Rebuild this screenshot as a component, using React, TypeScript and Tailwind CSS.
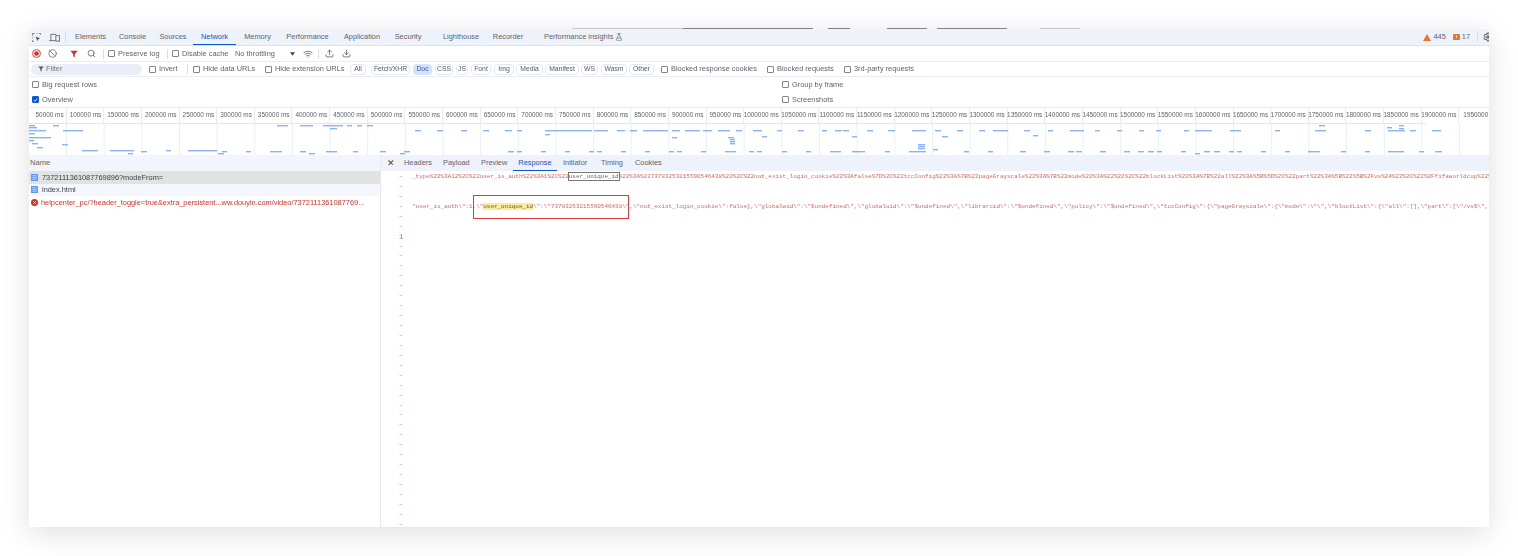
import { Ban, Download, FlaskConical, Search, Settings, Upload, Wifi } from 'lucide-react';

const sans = "font-['Liberation_Sans',Arial,sans-serif]";

const ticks = Array.from({ length: 39 }, (_, i) => (i + 1) * 50000);

// overview bars: [x1, x2, y]
const blue: number[][] = [
  [29, 35, 125], [53, 59, 125], [29, 37, 127], [29, 46, 130], [63, 83, 130], [29, 35, 133], [29, 51, 137], [29, 34, 140], [32, 38, 143], [62, 68, 144], [37, 43, 147],
  [82, 98, 150], [110, 134, 150], [141, 147, 151], [166, 171, 150], [188, 217, 150], [222, 227, 151], [246, 251, 151], [270, 282, 151], [300, 306, 151], [326, 337, 151], [353, 358, 151], [380, 386, 151], [404, 410, 151],
  [128, 133, 153], [218, 224, 153], [309, 315, 153], [400, 405, 153],
  [277, 288, 125], [300, 313, 125], [323, 343, 125], [347, 352, 125], [357, 362, 125], [367, 373, 125], [330, 337, 128],
  [415, 421, 130], [437, 443, 130], [461, 467, 130], [483, 489, 130],
  [505, 512, 130], [517, 522, 130], [545, 592, 130], [594, 608, 130], [617, 625, 130], [630, 637, 130], [643, 668, 130], [672, 680, 130], [685, 700, 130], [703, 712, 130], [718, 730, 130], [736, 742, 130], [753, 762, 130], [777, 782, 130], [798, 804, 130], [822, 827, 130], [835, 842, 130], [843, 849, 130], [867, 873, 130], [888, 895, 130], [912, 926, 130], [935, 941, 130], [957, 963, 130], [979, 985, 130], [993, 1008, 130],
  [545, 550, 134], [672, 677, 137], [762, 767, 136], [852, 857, 136], [942, 948, 136], [728, 734, 137], [730, 735, 139], [730, 735, 141], [730, 735, 143], [918, 925, 144], [918, 925, 146], [918, 925, 148],
  [508, 514, 151], [517, 522, 151], [541, 546, 151], [565, 570, 151], [589, 594, 151], [597, 602, 151], [621, 626, 151], [645, 650, 151], [669, 674, 151], [677, 682, 151], [701, 706, 151], [725, 736, 151], [749, 754, 151], [757, 762, 151], [782, 787, 151], [806, 811, 151], [830, 841, 151], [852, 865, 151], [885, 890, 151], [909, 926, 151], [933, 938, 149], [964, 969, 151], [988, 993, 151],
  [1024, 1030, 130], [1048, 1053, 130], [1070, 1084, 130], [1095, 1100, 130], [1117, 1122, 130], [1139, 1144, 130], [1156, 1161, 130], [1184, 1189, 130], [1195, 1212, 130], [1230, 1241, 130], [1275, 1280, 130], [1315, 1326, 130], [1365, 1371, 130], [1388, 1405, 130], [1410, 1416, 130], [1432, 1441, 130],
  [1319, 1325, 125], [1399, 1404, 125], [1387, 1392, 127], [1399, 1404, 128], [1033, 1038, 135],
  [1020, 1026, 151], [1044, 1050, 151], [1068, 1074, 151], [1076, 1082, 151], [1100, 1106, 151], [1124, 1130, 151], [1138, 1144, 151], [1148, 1154, 151], [1157, 1162, 151], [1181, 1186, 151], [1195, 1200, 153], [1204, 1210, 151], [1214, 1220, 151], [1229, 1234, 151], [1237, 1242, 151], [1261, 1266, 151], [1285, 1290, 151], [1308, 1320, 151], [1341, 1346, 151], [1365, 1370, 151], [1388, 1404, 151], [1419, 1424, 151], [1435, 1442, 151],
];

const chips = [
  ['All', 'w-[16px] mr-[5px]'],
  ['Fetch/XHR', 'w-[39px] mr-[3px]'],
  ['Doc', 'w-[19px] mr-[3px]'],
  ['CSS', 'w-[18px] mr-[3px]'],
  ['JS', 'w-[12px] mr-[3px]'],
  ['Font', 'w-[20px] mr-[3px]'],
  ['Img', 'w-[20px] mr-[2px]'],
  ['Media', 'w-[27px] mr-[2px]'],
  ['Manifest', 'w-[34px] mr-[2px]'],
  ['WS', 'w-[17px] mr-[3px]'],
  ['Wasm', 'w-[26px] mr-[2px]'],
  ['Other', 'w-[25px]'],
];

const mainTabs = [
  ['Elements', 'ml-[3px] w-[43px]'],
  ['Console', 'w-[41px]'],
  ['Sources', 'w-[40px]'],
  ['Network', 'w-[43px] text-[#0b57d0] border-b border-[#0b57d0]'],
  ['Memory', 'w-[43px]'],
  ['Performance', 'w-[57px]'],
  ['Application', 'w-[52px]'],
  ['Security', 'w-[40px]'],
  ['Lighthouse', 'w-[66px]'],
  ['Recorder', 'w-[28px]'],
];

const paneTabs = [
  ['Headers', 'w-[39px]'],
  ['Payload', 'w-[38px]'],
  ['Preview', 'w-[32px]'],
  ['Response', 'w-[44px] justify-center text-[#0b57d0] border-b border-[#0b57d0] mr-[6px]'],
  ['Initiator', 'w-[38px]'],
  ['Timing', 'w-[34px]'],
  ['Cookies', 'w-[40px]'],
];

function Check({ on = false, label, className = '' }: { on?: boolean; label: string; className?: string }) {
  return (
    <span className={`flex items-center shrink-0 ${className}`}>
      <span
        className={`flex items-center justify-center w-[7px] h-[7px] rounded-[1px] border mr-[3px] ${on ? 'bg-[#0b57d0] border-[#0b57d0]' : 'bg-white border-[#80848a]'}`}
      >
        {on && (
          <svg viewBox="0 0 8 8" className="w-[6px] h-[6px]">
            <path d="M1.2 4.2 3.2 6.2 6.8 1.8" fill="none" stroke="#fff" strokeWidth="1.3" />
          </svg>
        )}
      </span>
      {label}
    </span>
  );
}

function Divider({ className = '' }: { className?: string }) {
  return <span className={`w-px h-[10px] bg-[#d9dee6] shrink-0 ${className}`} />;
}

function DocIcon() {
  return (
    <svg viewBox="0 0 8 8" className="w-[7px] h-[7px] shrink-0 mr-[4px]">
      <rect x="0" y="0" width="8" height="8" fill="#5f9bf0" />
      <path d="M1.5 2h5M1.5 4h5M1.5 6h5" stroke="#d6e5fc" strokeWidth="0.8" />
    </svg>
  );
}

export default function App() {
  return (
    <div className={`w-[1518px] h-[556px] overflow-hidden bg-white pt-[28px] pl-[29px] ${sans}`}>
      <svg width="1460" height="1" className="block">
        <path d="M543 .5h111M1011 .5h40" stroke="#a8a8a8" strokeWidth="1" opacity="0.5" />
        <path d="M654 .5h130M799 .5h22M858 .5h40M908 .5h70" stroke="#6b6b6b" strokeWidth="1" opacity="0.8" />
      </svg>
      <div className="w-[1460px] h-[498px] flex flex-col bg-white text-[7.4px] leading-none text-[#5f6368] shadow-[0_6px_28px_rgba(0,0,0,0.13)] blur-[0.5px]">
        {/* main tabs */}
        <div className="h-[17px] shrink-0 flex items-stretch bg-[#edf2fb] border-b border-[#dbe3f0] overflow-hidden">
          <span className="flex items-center pl-[3px]">
            <svg viewBox="0 0 10 10" className="w-[9px] h-[9px] mr-[8px]">
              <path d="M3 .5H.5V3M.5 5v1M.5 8v1.5H2M5 .5h1M8 .5h1.5V2" fill="none" stroke="#555" strokeWidth="0.8" />
              <path d="M4 4l5 2-2 1 -1 2z" fill="#555" />
            </svg>
            <svg viewBox="0 0 12 10" className="w-[11px] h-[9px] mr-[5px]">
              <path d="M2 8V1.5h6M0 8.5h7" fill="none" stroke="#555" strokeWidth="0.9" />
              <rect x="7.5" y="3" width="4" height="6" fill="none" stroke="#555" strokeWidth="0.9" />
            </svg>
            <Divider />
          </span>
          {mainTabs.map(([t, c]) => (
            <span key={t} className={`flex items-center justify-center shrink-0 whitespace-nowrap ${c}`}>
              {t}
            </span>
          ))}
          <span className="flex items-center shrink-0 ml-[22px]">
            Performance insights
            <FlaskConical className="w-[8px] h-[8px] ml-[2px] text-[#555]" strokeWidth={1.6} />
          </span>
          <span className="flex items-center ml-auto">
            <svg viewBox="0 0 8 7" className="w-[8px] h-[7px] mr-[2px]">
              <path d="M4 0 8 7H0z" fill="#e8742c" />
            </svg>
            445
            <svg viewBox="0 0 8 7" className="w-[7px] h-[6px] ml-[7px] mr-[2px]">
              <rect width="8" height="7" rx="1" fill="#e8742c" />
              <rect x="3.5" y="1.5" width="1" height="3" fill="#fff" />
            </svg>
            17
            <Divider className="ml-[7px] mr-[5px]" />
            <Settings className="w-[10px] h-[10px] text-[#333] -mr-[4px]" strokeWidth={2.2} />
          </span>
        </div>

        {/* toolbar */}
        <div className="h-[16px] shrink-0 flex items-center border-b border-[#e9eef6] pl-[3px]">
          <svg viewBox="0 0 10 10" className="w-[9px] h-[9px] mr-[7px]">
            <circle cx="5" cy="5" r="4.4" fill="none" stroke="#d93025" />
            <circle cx="5" cy="5" r="2.6" fill="#d93025" />
          </svg>
          <Ban className="w-[9px] h-[9px] text-[#555] mr-[13px]" strokeWidth={1.8} />
          <svg viewBox="0 0 10 10" className="w-[8px] h-[8px] mr-[9px]">
            <path d="M.5 1h9L6 5.2V9L4 7.8V5.2z" fill="#d93025" />
          </svg>
          <Search className="w-[9px] h-[9px] text-[#555] mr-[7px]" strokeWidth={2} />
          <Divider className="mr-[4px]" />
          <Check label="Preserve log" className="w-[59px]" />
          <Divider className="mr-[4px]" />
          <Check label="Disable cache" className="w-[63px]" />
          <span className="w-[55px] shrink-0">No throttling</span>
          <svg viewBox="0 0 6 4" className="w-[5px] h-[4px] mr-[8px]">
            <path d="M0 0h6L3 4z" fill="#444" />
          </svg>
          <Wifi className="w-[10px] h-[10px] text-[#555] mr-[5px]" strokeWidth={1.8} />
          <Divider className="mr-[6px]" />
          <Upload className="w-[9px] h-[9px] text-[#444] mr-[8px]" strokeWidth={1.8} />
          <Download className="w-[9px] h-[9px] text-[#444]" strokeWidth={1.8} />
        </div>

        {/* filter bar */}
        <div className="h-[15px] shrink-0 flex items-center border-b border-[#e9eef6] pl-[2px]">
          <span className="flex items-center w-[111px] h-[11px] rounded-full bg-[#e9eef9] pl-[7px] mr-[7px] shrink-0 text-[#777]">
            <svg viewBox="0 0 10 10" className="w-[6px] h-[6px] mr-[2px]">
              <path d="M.5 1h9L6 5.2V9L4 7.8V5.2z" fill="#555" />
            </svg>
            Filter
          </span>
          <Check label="Invert" className="w-[38px]" />
          <Divider className="mr-[5px]" />
          <Check label="Hide data URLs" className="w-[72px]" />
          <Check label="Hide extension URLs" className="w-[85px]" />
          {chips.map(([t, c]) => (
            <span
              key={t}
              className={`flex items-center justify-center h-[11px] rounded-[4px] shrink-0 text-[6.8px] ${c} ${t === 'Doc' ? 'bg-[#d3e3fd] text-[#3a5a8c]' : 'border border-[#e3e7ee] text-[#555a61]'}`}
            >
              {t}
            </span>
          ))}
          <Check label="Blocked response cookies" className="w-[106px] ml-[7px]" />
          <Check label="Blocked requests" className="w-[77px]" />
          <Check label="3rd-party requests" />
        </div>

        {/* settings */}
        <div className="h-[30px] shrink-0 grid grid-cols-[750px_1fr] grid-rows-2 items-center pl-[3px]">
          <Check label="Big request rows" />
          <Check label="Group by frame" />
          <Check on label="Overview" />
          <Check label="Screenshots" />
        </div>

        {/* timeline ruler */}
        <div className="h-[16px] shrink-0 flex items-center border-t border-[#e4eaf5] text-[6.4px] overflow-hidden">
          {ticks.slice(0, 38).map(t => (
            <span key={t} className="w-[37.65px] shrink-0 h-full flex items-center justify-end pr-[2px] border-r border-[#e3ecfb] whitespace-nowrap">
              {t} ms
            </span>
          ))}
          <span className="pl-[4px] whitespace-nowrap">1950000</span>
        </div>

        {/* overview chart */}
        <svg width="1460" height="32" viewBox="29 123 1460 32" className="block shrink-0">
          <line x1="29" x2="1425" y1="123.5" y2="123.5" stroke="#e3e5e8" />
          {ticks.map((_, i) => (
            <line key={i} x1={66.5 + i * 37.65} x2={66.5 + i * 37.65} y1="123" y2="155" stroke="#e8effc" />
          ))}
          {blue.map(([a, b, y], i) => (
            <rect key={i} x={a} y={y} width={b - a} height="1.4" fill="#8ab4f8" />
          ))}
        </svg>

        {/* split view */}
        <div className="flex-1 min-h-0 flex">
          <div className="w-[352px] shrink-0 flex flex-col border-r border-[#e3e8f2]">
            <div className="h-[16px] shrink-0 flex items-center pl-[1px] text-[7.6px] bg-[#f2f5fc]">Name</div>
            <div className="h-[12.5px] flex items-center pl-[2px] bg-[#e0e3e1] text-[#3d4043] text-[7.4px]">
              <DocIcon />
              7372111361087769896?modeFrom=
            </div>
            <div className="h-[12.5px] flex items-center pl-[2px] bg-[#f5f7fd] text-[#3d4043] text-[7.4px]">
              <DocIcon />
              index.html
            </div>
            <div className="h-[13px] flex items-center pl-[2px] text-[#d93025] text-[7.4px] whitespace-nowrap overflow-hidden">
              <svg viewBox="0 0 8 8" className="w-[7px] h-[7px] shrink-0 mr-[3px]">
                <circle cx="4" cy="4" r="4" fill="#d93025" />
                <path d="M2.5 2.5l3 3M5.5 2.5l-3 3" stroke="#fff" strokeWidth="0.9" />
              </svg>
              helpcenter_pc/?header_toggle=true&extra_persistent...ww.douyin.com/video/7372111361087769...
            </div>
          </div>

          <div className="flex-1 min-w-0 flex flex-col overflow-hidden">
            <div className="h-[16px] shrink-0 flex items-stretch bg-[#edf2fb] pl-[6px]">
              <span className="flex items-center text-[#444] w-[17px] text-[9px]">✕</span>
              {paneTabs.map(([t, c]) => (
                <span key={t} className={`flex items-center shrink-0 ${c}`}>
                  {t}
                </span>
              ))}
            </div>
            <div className="relative flex-1 min-h-0 pt-[1px] font-['Liberation_Mono','Courier_New',monospace] text-[5.95px] leading-[10px] text-[#d9675f] overflow-hidden">
              {Array.from({ length: 36 }, (_, i) => (
                <div key={i} className="h-[9.94px] flex items-center whitespace-nowrap">
                  <span className={`w-[31px] shrink-0 pl-[18px] text-[#4a8ae8] ${i === 6 ? 'text-[7px]' : ''}`}>{i === 6 ? '1' : '–'}</span>
                  {i === 0 && (
                    <span>
                      _type%22%3A12%2C%22user_is_auth%22%3A1%2C%22
                      <span className="outline outline-[0.5px] outline-[#777] text-[#666]">user_unique_id</span>
                      %22%3A%2273783253215590546438%22%2C%22not_exist_login_cookie%22%3Afalse%7D%2C%22tccConfig%22%3A%7B%22pageGrayscale%22%3A%7B%22mode%22%3A%22%22%2C%22blockList%22%3A%7B%22all%22%3A%5B%5D%2C%22part%22%3A%5B%22%5B%2Fvs%24%22%2C%22%2Ffifaworldcup%22%2C%22
                    </span>
                  )}
                  {i === 3 && (
                    <span>
                      "user_is_auth\":1,\"
                      <span className="bg-[#fdeb9c] text-[#6b5a20]">user_unique_id</span>
                      \":\"73783253215590546438\",\"not_exist_login_cookie\":false{'}'},\"globalwid\":\"$undefined\",\"globaluid\":\"$undefined\",\"libraroid\":\"$undefined\",\"policy\":\"$undefined\",\"tccConfig\":{'{'}\"pageGrayscale\":{'{'}\"mode\":\"\",\"blockList\":{'{'}\"all\":[],\"part\":[\"/vs$\",\"/fi
                    </span>
                  )}
                </div>
              ))}
              <div className="absolute left-[92px] top-[24px] w-[156px] h-[24px] border border-[#e0393a]" />
            </div>
          </div>
        </div>
      </div>
    </div>
  );
}
